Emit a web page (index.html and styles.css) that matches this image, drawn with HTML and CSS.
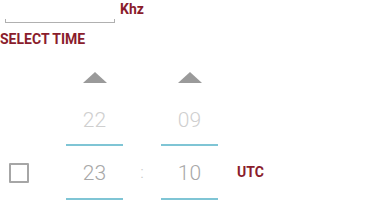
FILE: index.html
```html
<!DOCTYPE html>
<html>
<head>
<meta charset="utf-8">
<link rel="stylesheet" href="styles.css">
</head>
<body>
<div class="freq-row">
  <div class="freq-input"></div>
  <span class="unit">Khz</span>
</div>
<div class="title">SELECT TIME</div>
<div class="picker">
  <div class="arrow a-h"><svg width="24" height="11" viewBox="0 0 24 11"><polygon points="12,0 24,11 0,11" fill="#9a9a9a"/></svg></div>
  <div class="arrow a-m"><svg width="24" height="11" viewBox="0 0 24 11"><polygon points="12,0 24,11 0,11" fill="#9a9a9a"/></svg></div>
  <div class="prev p-h">22</div>
  <div class="prev p-m">09</div>
  <div class="line l1-h"></div>
  <div class="line l1-m"></div>
  <div class="check-cell"><div class="checkbox"></div></div>
  <div class="cur c-h">23</div>
  <div class="colon">:</div>
  <div class="cur c-m">10</div>
  <div class="utc">UTC</div>
  <div class="line l2-h"></div>
  <div class="line l2-m"></div>
</div>
</body>
</html>
```
FILE: styles.css
```css
html, body {
  margin: 0;
  padding: 0;
  background: #ffffff;
  font-family: Roboto, "Liberation Sans", sans-serif;
}

.freq-row {
  display: flex;
  align-items: flex-start;
  height: 30px;
}

.freq-input {
  width: 108px;
  height: 3px;
  margin: 19px 0 0 5px;
  border: 1px solid #b0b0b0;
  border-top: none;
}

.unit {
  margin-left: 5px;
  font-size: 14px;
  font-weight: 700;
  line-height: 18px;
  color: #8a1c2c;
}

.title {
  font-size: 14px;
  font-weight: 700;
  line-height: 18px;
  color: #8a1c2c;
}

.picker {
  display: grid;
  grid-template-columns: 66px 57px 38px 57px auto;
  grid-template-rows: 40px 56px 2px 52px 2px;
}

.arrow {
  display: flex;
  justify-content: center;
  align-items: flex-end;
  padding-bottom: 5px;
}
.arrow svg { display: block; }

.a-h { grid-column: 2; grid-row: 1; }
.a-m { grid-column: 4; grid-row: 1; }

.prev {
  font-size: 21px;
  font-weight: 300;
  line-height: 24px;
  color: #cfcfcf;
  text-align: center;
  padding-top: 20px;
}
.p-h { grid-column: 2; grid-row: 2; }
.p-m { grid-column: 4; grid-row: 2; }

.line {
  background: #7fc5d5;
}
.l1-h { grid-column: 2; grid-row: 3; }
.l1-m { grid-column: 4; grid-row: 3; }
.l2-h { grid-column: 2; grid-row: 5; }
.l2-m { grid-column: 4; grid-row: 5; }

.check-cell {
  grid-column: 1;
  grid-row: 4;
  display: flex;
  align-items: center;
  padding-left: 9px;
}

.checkbox {
  width: 16px;
  height: 16px;
  border: 2px solid #a6a6a6;
  border-radius: 1px;
  margin-top: 1px;
}

.cur {
  font-size: 21px;
  font-weight: 300;
  line-height: 24px;
  color: #a8a8a8;
  text-align: center;
  align-self: center;
  padding-top: 2px;
}
.c-h { grid-column: 2; grid-row: 4; }
.c-m { grid-column: 4; grid-row: 4; }

.colon {
  grid-column: 3;
  grid-row: 4;
  align-self: center;
  text-align: center;
  font-size: 17px;
  font-weight: 300;
  line-height: 20px;
  color: #c8c8c8;
}

.utc {
  grid-column: 5;
  grid-row: 4;
  align-self: center;
  margin-left: 19px;
  font-size: 14px;
  font-weight: 700;
  line-height: 18px;
  color: #8a1c2c;
}
```
